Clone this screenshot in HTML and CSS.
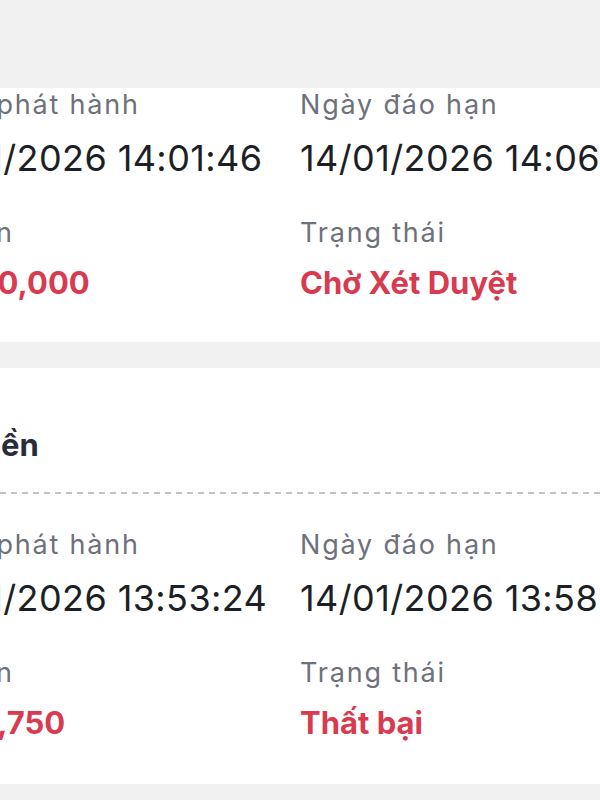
FILE: index.html
```html
<!DOCTYPE html>
<html lang="vi">
<head>
    <meta charset="UTF-8">
    <title>Lịch sử giao dịch</title>
    <link rel="stylesheet" href="styles.css">
</head>
<body>

<div class="list">
    <div class="card first">
        <div class="grid">
            <div class="item">
                <div class="label">Ngày phát hành</div>
                <div class="value">14/01/2026 14:01:46</div>
            </div>
            <div class="item">
                <div class="label">Ngày đáo hạn</div>
                <div class="value">14/01/2026 14:06:46</div>
            </div>
            <div class="item">
                <div class="label">Số tiền</div>
                <div class="value red">10,000,000</div>
            </div>
            <div class="item">
                <div class="label">Trạng thái</div>
                <div class="value red">Chờ Xét Duyệt</div>
            </div>
        </div>
    </div>

    <div class="card last">
        <h2 class="title">Rút tiền</h2>
        <div class="dash"></div>
        <div class="grid">
            <div class="item">
                <div class="label">Ngày phát hành</div>
                <div class="value">14/01/2026 13:53:24</div>
            </div>
            <div class="item">
                <div class="label">Ngày đáo hạn</div>
                <div class="value">14/01/2026 13:58:24</div>
            </div>
            <div class="item">
                <div class="label">Số tiền</div>
                <div class="value red">1,002,750</div>
            </div>
            <div class="item">
                <div class="label">Trạng thái</div>
                <div class="value red">Thất bại</div>
            </div>
        </div>
    </div>
</div>

</body>
</html>
```

FILE: styles.css
```css
*{box-sizing:border-box}
html,body{
    margin:0;
    padding:0;
    height:100%;
    overflow:hidden;
}
body{
    background:#f1f1f1;
    font-family:Inter,"Noto Sans",sans-serif;
    color:#1d1f27;
}
.list{
    padding-top:88px;
    display:flex;
    flex-direction:column;
    gap:26px;
}
.card{
    background:#fff;
    padding:0 0 36px 0;
}
.card.first{padding-top:1px}
.card.last{padding-bottom:38px}
.grid{
    display:grid;
    grid-template-columns:387px 1fr;
    margin-left:-87px;
    row-gap:36px;
    white-space:nowrap;
}
.label{
    font-size:27px;
    line-height:32px;
    letter-spacing:1.8px;
    color:#6e717b;
}
.value{
    margin-top:14px;
    font-size:36px;
    line-height:46px;
    letter-spacing:0.4px;
    color:#1d1f27;
}
.value.red{
    margin-top:11px;
    color:#d83a4f;
    font-weight:700;
    font-size:31px;
    letter-spacing:0;
}
.title{
    margin:57px 0 0 -77px;
    font-size:31px;
    line-height:40px;
    font-weight:700;
    color:#272d3b;
    white-space:nowrap;
}
.dash{
    height:2px;
    margin:27px 0 35px;
    background:repeating-linear-gradient(to right,#c4c4c4 0 6px,transparent 6px 11px);
}
```
